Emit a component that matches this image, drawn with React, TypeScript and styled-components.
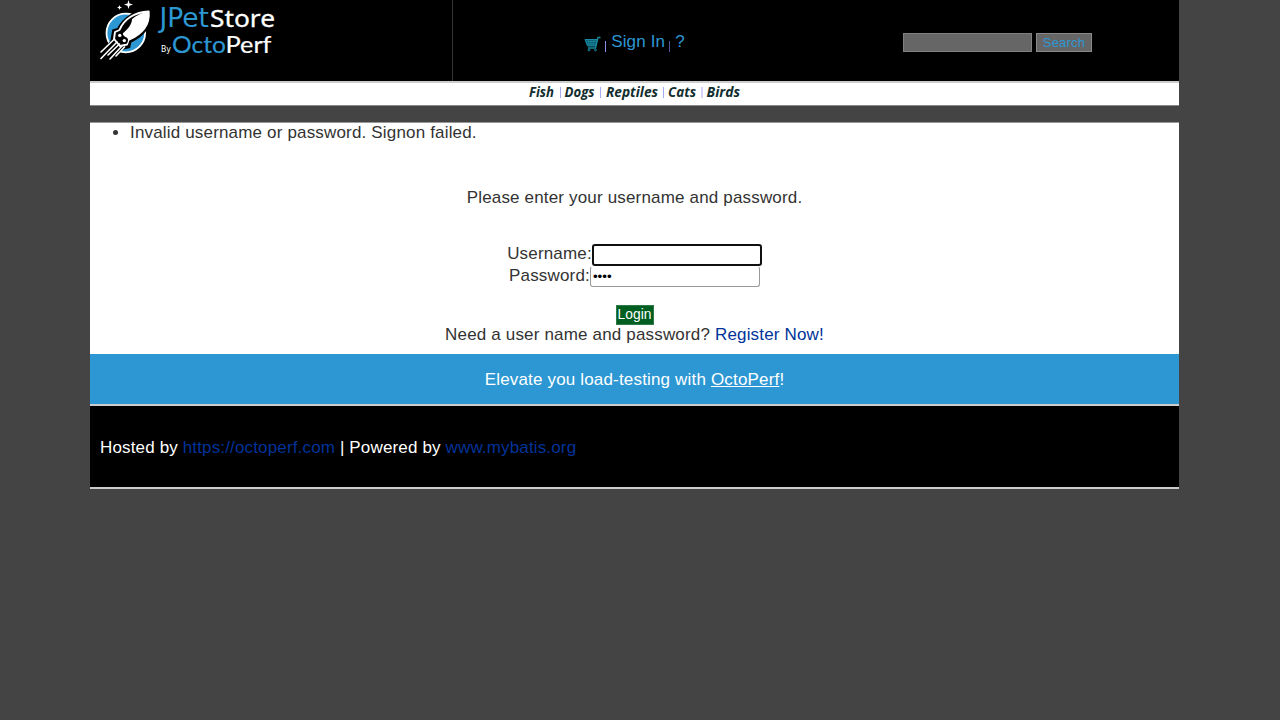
import React from "react";
import styled, { createGlobalStyle } from "styled-components";

const Global = createGlobalStyle`
  * { box-sizing: border-box; }
  body { margin: 0; background: #444; color: #333; overflow: hidden;
    font: 17px/20px "Liberation Sans", Arial, sans-serif; letter-spacing: 0.17px; }
  a { text-decoration: none; }
`;
const Page = styled.div`width: 1089px; margin-left: 90px;`;
const Header = styled.header`
  display: grid; grid-template-columns: 363px 363px 1fr; height: 81px; background: #000;
`;
const LogoCell = styled.div`
  border-right: 1px solid #333;
  svg { display: block; }
`;
const Menu = styled.div`
  display: flex; justify-content: center; align-items: flex-start; padding-top: 32px;
  svg { margin: 4px 3px 0 0; }
`;
const MenuLink = styled.a`color: #2c97d3;`;
const MenuBar = styled.i<{ $color: string; $left?: number }>`
  width: 1px; height: 11px; margin: 9px 5px 0 ${(p) => p.$left ?? 4}px; background: ${(p) => p.$color};
`;
const SearchForm = styled.form`display: flex; justify-content: center; gap: 4px; padding-top: 33px;`;
const SearchInput = styled.input`
  width: 129px; height: 19px; background: #666; border: 1px solid #808080; outline: none; padding: 0;
`;
const SearchButton = styled.button`
  width: 56px; height: 19px; background: #666; border: 1px solid #8a8a8a; padding: 0;
  color: #2c97d3; font: 13px/16px "Liberation Sans", Arial, sans-serif; letter-spacing: 0.2px;
`;
const QuickLinks = styled.nav`
  display: flex; justify-content: center; height: 25px; background: #fff;
  border-top: 2px solid #ccc; border-bottom: 1px solid #888;
  svg { display: block; height: 21px; }
`;
const Content = styled.main`
  height: 232px; margin-top: 16px; background: #fff; border-top: 1px solid #999; text-align: center;
`;
const Messages = styled.ul`margin: 0; padding: 0 0 0 40px; text-align: left;`;
const Prompt = styled.p`margin: 45px 0 36px;`;
const Field = styled.label`display: flex; justify-content: center; height: 22px; line-height: 20px;`;
const TextInput = styled.input<{ $focused?: boolean }>`
  width: 170px; height: ${(p) => (p.$focused ? 22 : 21)}px; padding: 0 ${(p) => (p.$focused ? 3 : 2)}px; outline: none;
  border: ${(p) => (p.$focused ? "2px solid #101010" : "1px solid #999")};
  border-top-color: ${(p) => (p.$focused ? "#101010" : "#fff")};
  border-radius: 3px; background: #fff; color: #000;
  font: 13.33px "Liberation Sans", Arial, sans-serif; letter-spacing: 0;
`;
const LoginButton = styled.button`
  display: block; width: 38px; height: 20px; margin: 17px auto 0; padding: 0;
  background: #005e21; border: 1px solid #2e7a48; color: #fff;
  font: 13.8px/18px "Liberation Sans", Arial, sans-serif; letter-spacing: 0;
`;
const Register = styled.div`a { color: #039; }`;
const Banner = styled.div`
  height: 50px; line-height: 52px; background: #2c97d3; color: #fff; text-align: center;
  a { color: #fff; text-decoration: underline; }
`;
const Footer = styled.footer`
  height: 85px; padding: 32px 0 0 10px; background: #000; color: #fff; letter-spacing: 0.15px;
  border-top: 2px solid #ccc; border-bottom: 2px solid #ccc;
  a { color: #039; }
`;

const Logo = () => (
  <svg width="190" height="64" viewBox="0 0 190 64">
    <circle cx="35.8" cy="33" r="19.3" fill="#2c97d3" stroke="#fff" strokeWidth="1.8" />
    <path d="M59 11.5C48 11 35 18 29 30L24.5 31.5L23 40L29 48L38 46L39 41C52 35 60 25 59 11.5Z" fill="#000" stroke="#000" strokeWidth="5" />
    <path d="M23 38L7 56L20 62L36 46Z" fill="#000" />
    <path d="M58.7 11.5C45 12 34 19 29.5 30L25 32L24 39L30 46L37 44.5L38.5 40C52 34 60 25 58.7 11.5Z" fill="#000" stroke="#fff" strokeWidth="1.9" strokeLinejoin="round" />
    <path d="M58.7 11.5C53 12 47 15 42 19C42 25 37 30 32 34L38.5 40C52 34 60 25 58.7 11.5Z" fill="#fff" />
    <path d="M24.5 39L11 52M27 42L11 58.5M29.5 44L18 55M32 46L20 59M34.5 47L26 56" stroke="#fff" strokeWidth="1.6" strokeLinecap="round" />
    <circle cx="29.8" cy="35.2" r="3.4" fill="#000" /><circle cx="34.5" cy="40.5" r="3.4" fill="#000" />
    <circle cx="29.8" cy="35.4" r="1.7" fill="#fff" /><circle cx="34.3" cy="40.6" r="1.7" fill="#fff" />
    <path d="M38.5 0L39.5 3.5L43 4.6L39.5 5.7L38.5 9L37.5 5.7L34 4.6L37.5 3.5ZM29.5 5L30.2 6.8L32 7.5L30.2 8.2L29.5 10L28.8 8.2L27 7.5L28.8 6.8Z" fill="#fff" />
    <g fontFamily="DejaVu Sans, sans-serif" letterSpacing="0">
      <text x="69.5" y="26.7" fontSize="26" textLength="49.5" lengthAdjust="spacingAndGlyphs" fill="#2c97d3">JPet</text>
      <text x="120" y="27" fontSize="23.5" fontFamily="Noto Sans, sans-serif" textLength="65" lengthAdjust="spacingAndGlyphs" fill="#fff" stroke="#fff" strokeWidth=".3">Store</text>
      <text x="71" y="52" fontSize="8.5" textLength="10" lengthAdjust="spacingAndGlyphs" fill="#fff">By</text>
    </g>
    <g fontFamily="Lato, sans-serif" fontSize="23.5" letterSpacing="0">
      <text x="82" y="53.3" textLength="54" lengthAdjust="spacingAndGlyphs" fill="#2c97d3" stroke="#2c97d3" strokeWidth=".2">Octo</text>
      <text x="135.5" y="53.3" textLength="46" lengthAdjust="spacingAndGlyphs" fill="#fff" stroke="#fff" strokeWidth=".2">Perf</text>
    </g>
  </svg>
);

const Cart = () => (
  <svg width="17" height="16" viewBox="0 0 17 16" fill="none" stroke="#168ba3">
    <path d="M1 3.5H13L12 10H3.5L1 3.5Z" fill="#0d5a6c" />
    <path d="M2 5.5H12M3 8H12M4 3.5L5.5 10M7 3.5V10M10 3.5L9 10" strokeWidth=".7" />
    <path d="M16.5 1.5H14L11.5 12H4" strokeWidth="1.3" />
    <circle cx="5" cy="14" r=".9" /><circle cx="11.5" cy="14" r=".9" />
  </svg>
);

const categories = [
  { name: "Fish", x: 4, w: 25 },
  { name: "Dogs", x: 39.5, w: 30 },
  { name: "Reptiles", x: 81, w: 52 },
  { name: "Cats", x: 143, w: 28 },
  { name: "Birds", x: 181.5, w: 33.5 },
];

export default function App() {
  return (
    <>
      <Global />
      <Page>
        <Header>
          <LogoCell><Logo /></LogoCell>
          <Menu>
            <Cart /><MenuBar $color="#8c8cf0" $left={1} />
            <MenuLink href="#">Sign In</MenuLink><MenuBar $color="#55559c" />
            <MenuLink href="#">?</MenuLink>
          </Menu>
          <SearchForm>
            <SearchInput /><SearchButton type="button">Search</SearchButton>
          </SearchForm>
        </Header>
        <QuickLinks>
          <svg width="219" height="21" viewBox="0 0 219 21">
            <g fontFamily="Open Sans, sans-serif" fontSize="13.5" fontWeight="700" fontStyle="italic" fill="#122e2e" letterSpacing="0">
              {categories.map((c) => (
                <text key={c.name} x={c.x} y="14" textLength={c.w} lengthAdjust="spacingAndGlyphs">{c.name}</text>
              ))}
            </g>
            <path d="M35.5 4V15M75.5 4V15M138.5 4V15M177 4V15" stroke="#a9a9fa" />
          </svg>
        </QuickLinks>
        <Content>
          <Messages><li>Invalid username or password. Signon failed.</li></Messages>
          <Prompt>Please enter your username and password.</Prompt>
          <Field>Username:<TextInput $focused /></Field>
          <Field>Password:<TextInput type="password" defaultValue="j2ee" /></Field>
          <LoginButton type="button">Login</LoginButton>
          <Register>Need a user name and password? <a href="#">Register Now!</a></Register>
        </Content>
        <Banner>Elevate you load-testing with <a href="#">OctoPerf</a>!</Banner>
        <Footer>Hosted by <a href="#">https://octoperf.com</a> | Powered by <a href="#">www.mybatis.org</a></Footer>
      </Page>
    </>
  );
}
